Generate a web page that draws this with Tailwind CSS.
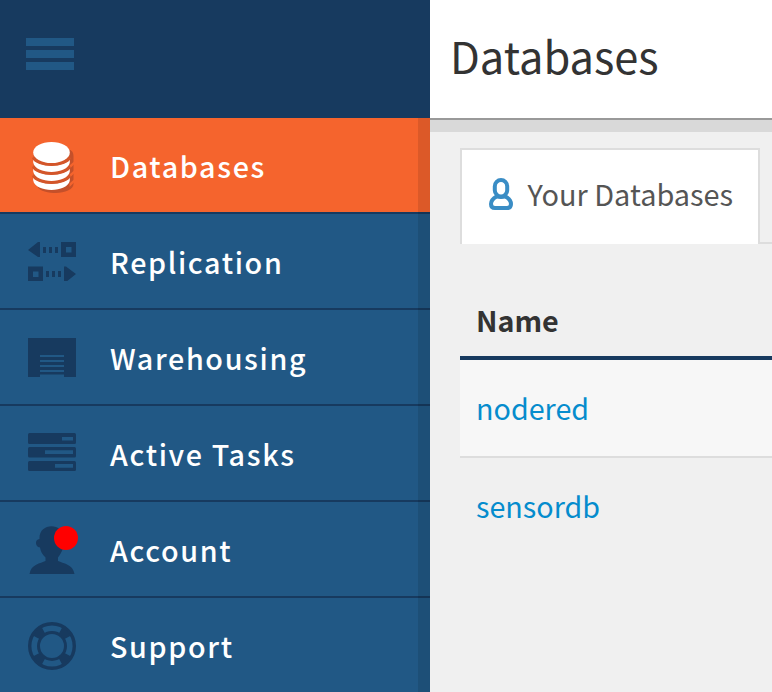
<!DOCTYPE html>
<html lang="en">
<head>
<meta charset="utf-8">
<title>Databases</title>
<script src="https://cdn.jsdelivr.net/npm/@tailwindcss/browser@4"></script>
</head>
<body class="flex h-[692px] w-[772px] overflow-hidden bg-[#f0f0f0] font-['Noto_Sans_CJK_SC','Noto_Sans',sans-serif] text-[28.7px] leading-10">
<aside class="flex w-[430px] shrink-0 flex-col bg-[#173a5f]">
  <div class="h-[118px] shrink-0 pl-[26px] pt-[38px]">
    <button class="flex w-12 flex-col gap-1" aria-label="Menu">
      <span class="h-2 w-full bg-[#215885]"></span>
      <span class="h-2 w-full bg-[#215885]"></span>
      <span class="h-2 w-full bg-[#215885]"></span>
    </button>
  </div>
  <nav class="relative flex flex-col font-medium tracking-[1.65px] text-white">
    <a class="flex h-24 shrink-0 items-center border-b-2 border-[#173a5f] bg-[#f5642d] pl-7">
      <svg class="mr-[34px] h-[56px] w-12" viewBox="28 137 48 56">
        <path fill="#c4502a" d="M37 150h33.500q3 2 3 6v28c0 11-35 13-37 0z"/>
        <path fill="#f5642d" d="M69.500 165.500l4.500-4v3l-4.500 4.500zM69.500 174.500l4.500-4v3l-4.500 4.500zM69.500 183.500l4.500-4v3l-4.500 4.500z"/>
        <path fill="#d3562a" d="M33.500 153h36v29h-36z"/>
        <g fill="#fff">
          <ellipse cx="51.500" cy="152.500" rx="18.300" ry="10.500"/>
          <path d="M33.200 158.500c4 9.500 32.600 9.500 36.600 0v4c-2 12.500-34.600 12.500-36.600 0z"/>
          <path d="M33.200 167.500c4 9.500 32.600 9.500 36.600 0v4c-2 12.500-34.600 12.500-36.600 0z"/>
          <path d="M33.200 176.500c4 9.500 32.600 9.500 36.600 0v4c-2 12.500-34.600 12.500-36.600 0z"/>
        </g>
        <g fill="none" stroke="#d3562a" stroke-width="2.500">
          <path d="M33 157.500c4 9.500 33 9.500 37 0M33 166.500c4 9.500 33 9.500 37 0M33 175.500c4 9.500 33 9.500 37 0"/>
        </g>
      </svg>
      <span class="pt-0.5">Databases</span>
    </a>
    <a class="flex h-24 shrink-0 items-center border-b-2 border-[#173a5f] bg-[#215885] pl-7">
      <svg class="mr-[34px] h-[40px] w-12" viewBox="28 241 48 40" fill="#173a5f">
        <path fill-rule="evenodd" d="M28 250l10-8h2v15h-2zM61 242h15v15H61zm5 5v5.500h5.500V247zM43 247h3v6h-3zM49 247h3v6h-3zM55 247h3v6h-3zM28 266.500h15v15H28zm5 5v5.500h5.500v-5.500zM46 271h3v6h-3zM52 271h3v6h-3zM58 271h3v6h-3zM64 266.500h2l10 7.500-10 8h-2z"/>
      </svg>
      <span class="pt-0.5">Replication</span>
    </a>
    <a class="flex h-24 shrink-0 items-center border-b-2 border-[#173a5f] bg-[#215885] pl-7">
      <svg class="mr-[34px] h-[40px] w-12" viewBox="28 337 48 40" fill="#173a5f">
        <path d="M28 338h48v39H64v-22H40v22H28zM40 357h24v3H40zM40 362h24v3H40zM40 367h24v3H40zM40 372h24v2.500H40z"/>
      </svg>
      <span class="pt-0.5">Warehousing</span>
    </a>
    <a class="flex h-24 shrink-0 items-center border-b-2 border-[#173a5f] bg-[#215885] pl-7">
      <svg class="mr-[34px] h-[40px] w-12" viewBox="28 433 48 40">
        <g fill="#173a5f"><rect x="28" y="433" width="48" height="11" rx="1.500"/><rect x="28" y="447" width="48" height="10.500" rx="1.500"/><rect x="28" y="461" width="48" height="10" rx="1.500"/></g>
        <path fill="#215885" d="M62 437h11v3.500H62zM45 450.300h28v3.700H45zM55 464h18v3.700H55z"/>
      </svg>
      <span class="pt-0.5">Active Tasks</span>
    </a>
    <a class="flex h-24 shrink-0 items-center border-b-2 border-[#173a5f] bg-[#215885] pl-7">
      <svg class="mr-[32px] h-[52px] w-[50px]" viewBox="28 523 50 52">
        <path fill="#173a5f" d="M39.500 539c-1-17 24.500-17 24.500 0 0 9-2 13-6 18.500v3.500c5 2.500 15 3 16.500 13H29.500c1.500-10 11-10.500 16-13v-3.500c-3-3-5-6-5.500-10-5-.5-5.500-8-.5-8.500z"/>
        <circle cx="66" cy="538" r="12" fill="#f00"/>
      </svg>
      <span class="pt-0.5">Account</span>
    </a>
    <a class="flex h-24 shrink-0 items-center border-b-2 border-[#173a5f] bg-[#215885] pl-7">
      <svg class="mr-[34px] h-[50px] w-12" viewBox="0 -2 48 50" fill="none">
        <circle cx="24" cy="24" r="22.300" stroke="#173a5f" stroke-width="3.400"/>
        <circle cx="24" cy="24" r="13.500" stroke="#173a5f" stroke-width="3"/>
        <circle cx="24" cy="24" r="17.800" stroke="#173a5f" stroke-width="7" pathLength="360" stroke-dasharray="32 58" stroke-dashoffset="-29"/>
      </svg>
      <span class="pt-0.5">Support</span>
    </a>
    <div class="absolute inset-y-0 right-0 w-3 bg-black/10"></div>
  </nav>
</aside>
<main class="min-w-0 flex-1">
  <header class="flex h-[120px] items-center border-b-2 border-[#999] bg-white pb-2 pl-5">
    <h1 class="text-[43.4px] leading-[60px] text-[#333]">Databases</h1>
  </header>
  <div class="h-3 bg-[#d9d9d9]"></div>
  <section class="pl-[30px] pt-4">
    <div class="flex h-24 items-end">
      <div class="flex h-24 w-[300px] shrink-0 items-center border-2 border-b-0 border-[#ddd] bg-white pb-[6px] pl-[27px]">
        <svg class="mr-[14.500px] h-8 w-6" viewBox="0 0 24 32" fill="none" stroke="#3a8dc5" stroke-width="4">
          <rect x="5.800" y="2" width="12.400" height="16.500" rx="6.200"/>
          <path d="M7.500 18.500C4 20.500 2 23 2 26q0 4 4 4h12q4 0 4-4c0-3-2-5.500-5.500-7.500"/>
          <path d="M7 18.500q5 2 10 0" stroke-width="3"/>
        </svg>
        <span class="whitespace-nowrap pb-0.5 text-[28.9px] text-[#555]">Your Databases</span>
      </div>
      <div class="h-0.5 flex-1 bg-[#ddd]"></div>
    </div>
    <div class="flex h-[116px] flex-col justify-end border-b-4 border-[#173a5f] pb-4 pl-4 font-bold text-[#333]">Name</div>
    <div class="flex h-[98px] items-center border-b-2 border-[#ddd] bg-[#f7f7f7] pl-4 text-[#058ccd]">nodered</div>
    <div class="flex h-24 items-center pl-4 text-[#058ccd]">sensordb</div>
  </section>
</main>
</body>
</html>
